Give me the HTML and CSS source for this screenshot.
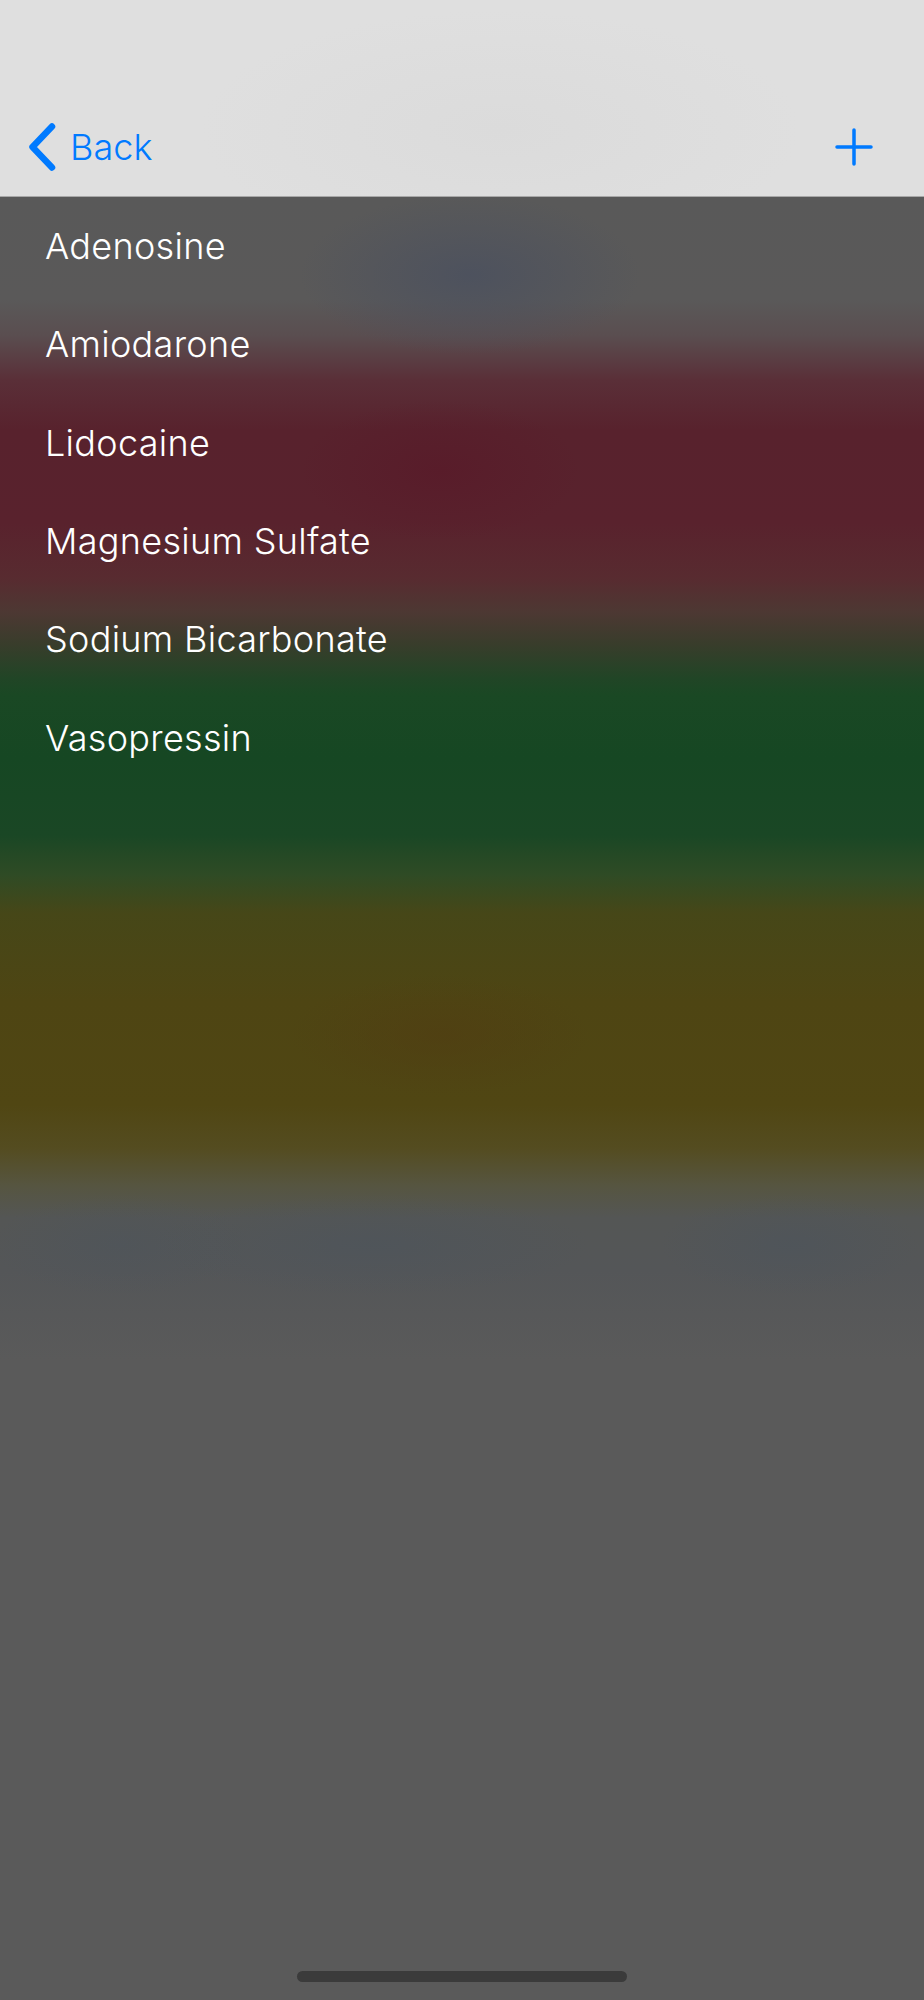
FILE: index.html
```html
<!DOCTYPE html>
<html lang="en">
<head>
<meta charset="utf-8">
<title>Medications</title>
<link rel="stylesheet" href="styles.css">
</head>
<body>
<div class="screen">
  <header class="navbar">
    <a class="nav-back">
      <svg class="chevron" width="28" height="50" viewBox="0 0 28 50"><path d="M24 4.500 L4.500 25 L24 45.500" fill="none" stroke="#007aff" stroke-width="6.5" stroke-linecap="round" stroke-linejoin="round"/></svg>
      <span>Back</span>
    </a>
    <svg class="plus" width="38" height="38" viewBox="0 0 38 38"><path d="M19 2V36M2 19H36" fill="none" stroke="#007aff" stroke-width="3.5" stroke-linecap="round"/></svg>
  </header>
  <ul class="list">
    <li>Adenosine</li>
    <li>Amiodarone</li>
    <li>Lidocaine</li>
    <li>Magnesium Sulfate</li>
    <li>Sodium Bicarbonate</li>
    <li>Vasopressin</li>
  </ul>
  <div class="home-indicator"></div>
</div>
</body>
</html>
```
FILE: styles.css
```css
* { box-sizing: border-box; }
html, body { margin: 0; padding: 0; }
body { background: #5a5a5a; font-family: Inter, "Liberation Sans", sans-serif; }
.screen {
  position: relative;
  width: 924px;
  height: 2000px;
  overflow: hidden;
  display: flex;
  flex-direction: column;
  background:
    radial-gradient(ellipse 170px 80px at 470px 275px, rgba(74, 80, 95, 0.8), rgba(74, 80, 95, 0) 100%),
    radial-gradient(ellipse 150px 60px at 440px 1035px, rgba(80, 62, 18, 0.7), rgba(80, 62, 18, 0) 100%),
    radial-gradient(ellipse 130px 50px at 790px 1245px, rgba(76, 84, 92, 0.6), rgba(76, 84, 92, 0) 100%),
    radial-gradient(ellipse 220px 50px at 370px 1245px, rgba(76, 84, 92, 0.6), rgba(76, 84, 92, 0) 100%),
    radial-gradient(ellipse 130px 50px at 120px 1245px, rgba(76, 84, 92, 0.5), rgba(76, 84, 92, 0) 100%),
    radial-gradient(ellipse 140px 70px at 440px 470px, rgba(88, 24, 40, 0.6), rgba(88, 24, 40, 0) 100%),
    linear-gradient(180deg,
      #595959 197px,
      #5a5959 300px,
      #5a4e50 335px,
      #5a2f38 380px,
      #58222d 430px,
      #59222d 523px,
      #582b30 578px,
      #4d3833 612px,
      #383d2b 645px,
      #214526 678px,
      #1a4824 695px,
      #164723 757px,
      #1a4725 835px,
      #2f4b25 875px,
      #464718 913px,
      #4e4513 1002px,
      #504613 1105px,
      #544c20 1148px,
      #565540 1185px,
      #545655 1218px,
      #545658 1270px,
      #575859 1315px,
      #5a5a5a 1360px);
}
.navbar {
  height: 197px;
  flex: none;
  padding: 122px 51px 0 28px;
  display: flex;
  justify-content: space-between;
  align-items: flex-start;
  background: radial-gradient(ellipse 300px 120px at 500px 130px, #dbdbdb, #dfdfdf 100%);
  border-bottom: 1px solid #a8a8a8;
}
.nav-back { display: flex; align-items: center; gap: 14px; height: 50px; color: #007aff; font-size: 36px; font-weight: 350; letter-spacing: 0.05px; }
.plus { margin-top: 6px; }
.list { list-style: none; margin: 0; padding: 0 0 0 45px; color: #fff; font-size: 36px; font-weight: 350; letter-spacing: 0.3px; }
.list li { height: 98.3px; display: flex; align-items: center; }
.home-indicator { position: absolute; left: 297px; bottom: 18px; width: 330px; height: 11px; border-radius: 6px; background: #3b3b3b; }
```
